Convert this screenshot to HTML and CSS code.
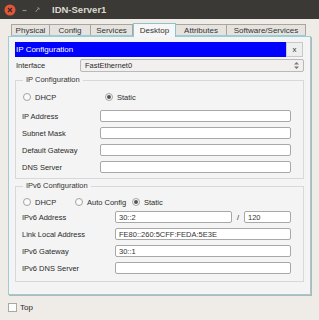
FILE: index.html
```html
<!DOCTYPE html>
<html lang="en">
    <head>
        <meta charset="UTF-8">
        <title>IDN-Server1</title>
        <link rel="stylesheet" href="styles.css">
    </head>
    <body>

        <div class="window">

            <div class="titlebar">
                <svg class="win_btns" width="46" height="18" viewBox="0 0 46 18">
                    <circle cx="10" cy="9" r="5.5" fill="#e2573a"/>
                    <path d="M8 7 L12 11 M12 7 L8 11" stroke="#3a2a26" stroke-width="1.3"/>
                    <path d="M22.5 9.5 H26.5" stroke="#8f8c86" stroke-width="1.2"/>
                    <path d="M36 10 L39 7 M37 7 H39 V9 M36 10 V11" stroke="#8f8c86" stroke-width="1"/>
                </svg>
                <span class="win_title">IDN-Server1</span>
            </div>

            <div class="tabs">
                <div class="tab tab_physical">Physical</div>
                <div class="tab tab_config">Config</div>
                <div class="tab tab_services">Services</div>
                <div class="tab tab_desktop tab_active">Desktop</div>
                <div class="tab tab_attr">Attributes</div>
                <div class="tab tab_soft">Software/Services</div>
            </div>

            <div class="panel">

                <div class="app_head">
                    <div class="app_title">IP Configuration</div>
                    <div class="app_close">x</div>
                </div>

                <div class="iface_row">
                    <span class="iface_label">Interface</span>
                    <div class="select">
                        <span>FastEthernet0</span>
                        <svg width="7" height="9" viewBox="0 0 7 9">
                            <path d="M1 3.5 L3.5 1 L6 3.5 Z M1 5.5 L3.5 8 L6 5.5 Z" fill="#777"/>
                        </svg>
                    </div>
                </div>

                <fieldset class="group group_ip">
                    <legend>IP Configuration</legend>
                    <div class="radios">
                        <span class="radio_item"><span class="radio"></span>DHCP</span>
                        <span class="radio_item"><span class="radio radio_on"></span>Static</span>
                    </div>
                    <div class="row"><label>IP Address</label><input type="text" class="field"></div>
                    <div class="row"><label>Subnet Mask</label><input type="text" class="field"></div>
                    <div class="row"><label>Default Gateway</label><input type="text" class="field"></div>
                    <div class="row"><label>DNS Server</label><input type="text" class="field"></div>
                </fieldset>

                <fieldset class="group group_v6">
                    <legend>IPv6 Configuration</legend>
                    <div class="radios">
                        <span class="radio_item"><span class="radio"></span>DHCP</span>
                        <span class="radio_item"><span class="radio"></span>Auto Config</span>
                        <span class="radio_item"><span class="radio radio_on"></span>Static</span>
                    </div>
                    <div class="row">
                        <label>IPv6 Address</label>
                        <input type="text" class="field" value="30::2">
                        <span class="slash">/</span>
                        <input type="text" class="field prefix" value="120">
                    </div>
                    <div class="row"><label>Link Local Address</label><input type="text" class="field" value="FE80::260:5CFF:FEDA:5E3E"></div>
                    <div class="row"><label>IPv6 Gateway</label><input type="text" class="field" value="30::1"></div>
                    <div class="row"><label>IPv6 DNS Server</label><input type="text" class="field"></div>
                </fieldset>

            </div>

            <div class="footer">
                <span class="check"></span>Top
            </div>

        </div>

    </body>
</html>
```

FILE: styles.css
```css
* {
    margin: 0;
    padding: 0;
    box-sizing: border-box;
}

body {
    width: 319px;
    height: 320px;
    overflow: hidden;
    font-family: "Liberation Sans", Arial, sans-serif;
    font-size: 7.5px;
    color: #2a2a2a;
}

.window {
    display: flex;
    flex-direction: column;
    height: 320px;
    background-color: #efebe7;
}

/* title bar */
.titlebar {
    height: 19px;
    display: flex;
    align-items: center;
    background-color: #3a3935;
}

.win_btns {
    flex: none;
}

.win_title {
    margin-left: 6px;
    color: #dcd8d0;
    font-weight: bold;
    font-size: 9.5px;
}

/* tabs */
.tabs {
    display: flex;
    align-items: flex-end;
    height: 13px;
    margin-top: 4px;
    padding-left: 11px;
    position: relative;
    z-index: 1;
}

.tab {
    height: 12px;
    display: flex;
    align-items: center;
    justify-content: center;
    font-size: 8px;
    color: #333;
    background-color: #e6e3df;
    border: 1px solid #a9a6a2;
    border-left: none;
    border-bottom: 1px solid #9ccdd6;
}

.tab_physical {
    width: 39px;
    border-left: 1px solid #a9a6a2;
}

.tab_config {
    width: 41px;
}

.tab_services {
    width: 42px;
}

.tab_desktop {
    width: 43px;
}

.tab_attr {
    width: 51px;
}

.tab_soft {
    width: 79px;
}

.tab_active {
    height: 14px;
    margin-bottom: -1px;
    background-color: #f6f6f6;
    border-color: #8fc2cc;
    border-bottom: none;
    border-left: 1px solid #8fc2cc;
}

/* main panel */
.panel {
    height: 259px;
    margin: 0 8px;
    padding: 5px 6px 0 6px;
    background-color: #f4f4f4;
    border: 1px solid #9ccdd6;
    box-shadow: 1px 1px 0 #b9b5b0;
}

.app_head {
    display: flex;
    height: 15px;
}

.app_title {
    flex: 1;
    display: flex;
    align-items: center;
    padding-left: 1px;
    background-color: #0000ff;
    color: #ffffff;
    font-size: 8px;
}

.app_close {
    width: 17px;
    display: flex;
    align-items: center;
    justify-content: center;
    margin-right: 1px;
    background-color: #eeeeee;
    border: 1px solid #c8c8c8;
    font-size: 8px;
    color: #333;
}

.iface_row {
    display: flex;
    align-items: center;
    margin-top: 2px;
    height: 13px;
}

.iface_label {
    width: 65px;
    padding-left: 1px;
}

.select {
    flex: 1;
    height: 13px;
    display: flex;
    align-items: center;
    justify-content: space-between;
    padding: 0 3px 0 4px;
    background-color: #f1f0ee;
    border: 1px solid #b9b9b9;
    border-radius: 2px;
}

/* field groups */
.group {
    border: 1px solid #d8d8d8;
    padding: 0 6px 0 6px;
}

.group legend {
    padding: 0 3px;
    margin-left: 1px;
    font-size: 7.5px;
    line-height: 10px;
    color: #333;
}

.group_ip {
    margin-top: 3px;
    padding-top: 6px;
    padding-bottom: 5px;
}

.group_v6 {
    margin-top: 2px;
    padding-top: 5px;
    padding-bottom: 7px;
}

.radios {
    display: flex;
    align-items: center;
    height: 12px;
    margin-bottom: 7px;
}

.group_v6 .radios {
    margin-bottom: 3px;
}

.radio_item {
    display: flex;
    align-items: center;
    gap: 4px;
    margin-left: 1px;
    width: 81px;
}

.group_v6 .radio_item {
    width: 51px;
}

.group_v6 .radio_item:nth-child(2) {
    width: 56px;
}

.radio {
    width: 8px;
    height: 8px;
    border: 1px solid #a3a3a3;
    border-radius: 50%;
    background-color: #fafafa;
    display: flex;
    align-items: center;
    justify-content: center;
}

.radio_on::after {
    content: "";
    width: 4px;
    height: 4px;
    border-radius: 50%;
    background-color: #555;
}

.row {
    display: flex;
    align-items: center;
    height: 12px;
    margin-bottom: 5px;
}

.row:last-child {
    margin-bottom: 0;
}

.row label {
    width: 78px;
    flex: none;
}

.group_v6 .row label {
    width: 93px;
}

.field {
    flex: 1;
    min-width: 0;
    height: 12px;
    margin-right: 6px;
    padding: 0 3px;
    border: 1px solid #a8a8a8;
    border-radius: 2px;
    background-color: #ffffff;
    font-family: "Liberation Sans", Arial, sans-serif;
    font-size: 7.5px;
    color: #333;
    outline: none;
}

.row .field:not(:last-child) {
    margin-right: 0;
}

.slash {
    width: 12px;
    text-align: center;
}

.prefix {
    flex: none;
    width: 47px;
}

/* footer */
.footer {
    display: flex;
    align-items: center;
    gap: 3px;
    margin-top: 8px;
    padding-left: 8px;
    font-size: 8px;
}

.check {
    width: 9px;
    height: 9px;
    border: 1px solid #a8a8a8;
    background-color: #fdfdfd;
}
```
